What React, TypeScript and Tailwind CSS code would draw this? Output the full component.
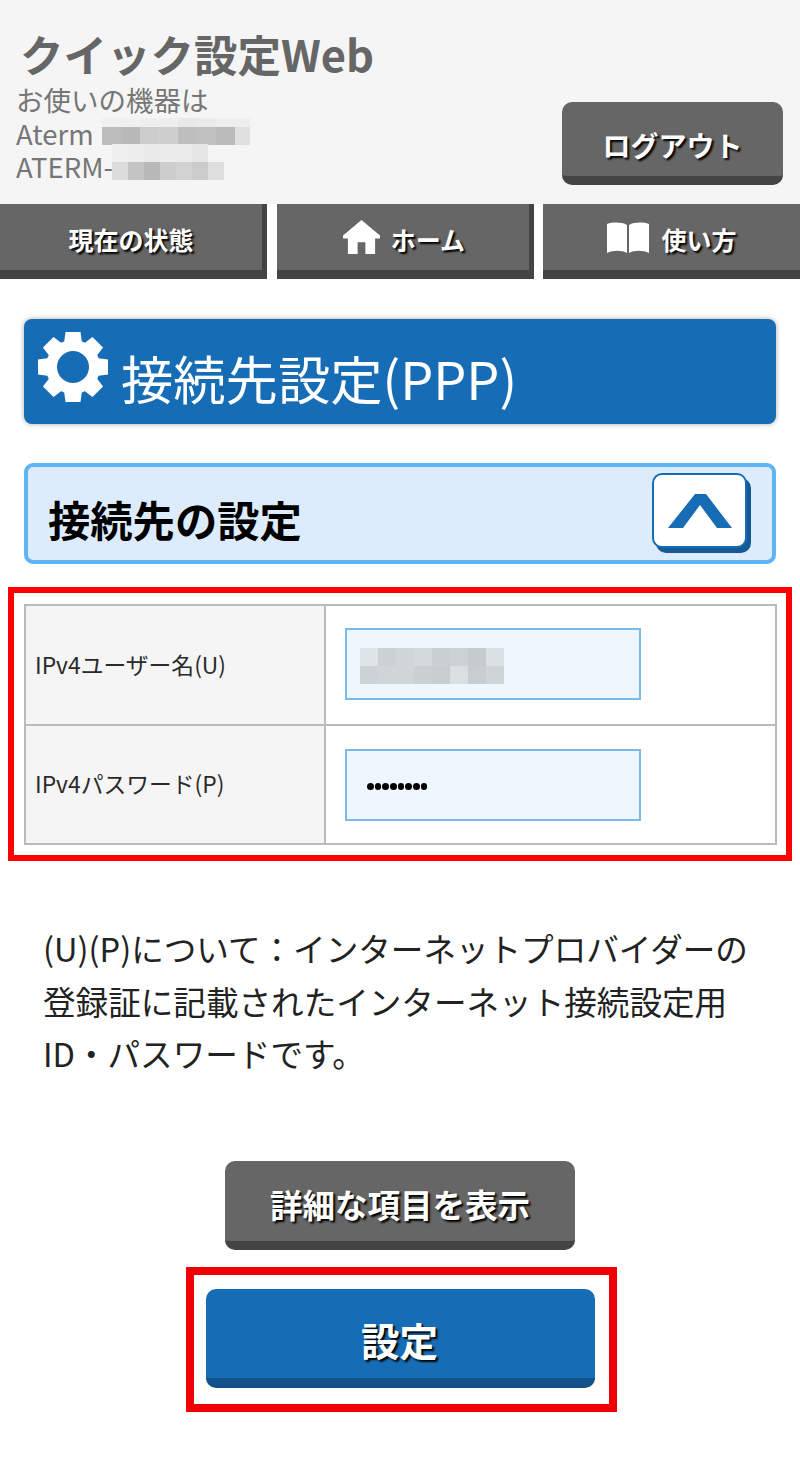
import React from "react";

const FONT = "[font-family:'Noto_Sans_CJK_JP','Noto_Sans',sans-serif]";

function Mosaic({ rows, cell, rowH, className }: { rows: (string | null)[][]; cell: number; rowH: number[]; className?: string }) {
  const w = Math.max(...rows.map((r) => r.length)) * cell;
  const h = rowH.reduce((a, b) => a + b, 0);
  let y = 0;
  return (
    <svg width={w} height={h} viewBox={`0 0 ${w} ${h}`} className={className} shapeRendering="crispEdges">
      {rows.map((r, i) => {
        const top = y;
        y += rowH[i];
        return r.map((c, j) => (c ? <rect key={`${i}-${j}`} x={j * cell} y={top} width={cell} height={rowH[i]} fill={c} /> : null));
      })}
    </svg>
  );
}

function Button3D({ label, className }: { label: string; className: string }) {
  return (
    <button className={`flex items-center justify-center font-bold text-white [text-shadow:2px_2px_2px_#000] ${className}`}>
      {label}
    </button>
  );
}

function NavTab({ children, className }: { children: React.ReactNode; className: string }) {
  return (
    <div className={`flex h-[75px] items-center justify-center gap-[11px] border-b-[9px] border-r-[5px] border-b-[#444444] border-r-[#444444] bg-[#666666] text-[25px] font-bold text-white [text-shadow:2px_2px_2px_#000] ${className}`}>
      {children}
    </div>
  );
}

function Gear() {
  const teeth = [0, 45, 90, 135, 180, 225, 270, 315];
  return (
    <svg width="72" height="72" viewBox="0 0 72 72" className="shrink-0">
      {teeth.map((a) => (
        <polygon key={a} points="28.5,1 43.5,1 45.5,16 26.5,16" fill="#fff" transform={`rotate(${a} 36 36)`} />
      ))}
      <circle cx="36" cy="36" r="21.5" fill="none" stroke="#fff" strokeWidth="11" />
    </svg>
  );
}

export default function App() {
  return (
    <div className={`${FONT} h-[1484px] w-[800px] bg-white`}>
      <header className="flex h-[204px] justify-between bg-[#f5f5f5] pl-[16px] pr-[17px]">
        <div className="pt-[25px]">
          <h1 className="ml-[4px] text-[43.5px] font-bold leading-[58px] text-[#666666]">クイック設定Web</h1>
          <div className="text-[27.5px] leading-[33.5px] text-[#767676]">
            <div>お使いの機器は</div>
            <div className="relative">
              Aterm
              <Mosaic
                className="absolute left-[86px] top-[1px]"
                cell={19}
                rowH={[9, 18]}
                rows={[
                  ["#f0f0f0", "#f0f0f0", "#eeeeee", "#eeeeee", "#e9e9e9", "#ebebeb", "#eeeeee"],
                  ["#bdbdbd", "#b9b9b9", "#cccccc", "#cfcfcf", "#bebebe", "#c0c0c0", "#bbbbbb"],
                ]}
              />
              <div className="absolute left-[219px] top-[1px] h-[9px] w-[15px] bg-[#eeeeee]" />
              <div className="absolute left-[219px] top-[10px] h-[18px] w-[15px] bg-[#e0e0e0]" />
            </div>
            <div className="relative">
              ATERM-
              <Mosaic
                className="absolute left-[96px] top-[-6px]"
                cell={16}
                rowH={[18, 18]}
                rows={[
                  ["#f0f0f0", "#ededed", "#eaeaea", "#ececec", "#ebebeb", "#e6e6e6", null],
                  ["#dcdcdc", "#c4c4c4", "#b9b9b9", "#cdcdcd", "#d2d2d2", "#cbcbcb", "#dedede"],
                ]}
              />
            </div>
          </div>
        </div>
        <Button3D
          label="ログアウト"
          className="mt-[102px] h-[83px] w-[221px] rounded-[10px] border-b-[9px] border-[#444444] bg-[#666666] pt-[12px] text-[28px]"
        />
      </header>

      <nav className="flex justify-between">
        <NavTab className="w-[267px]">
          <span className="mt-[6px]">現在の状態</span>
        </NavTab>
        <NavTab className="w-[257px] pl-[3px]">
          <svg width="37" height="34" viewBox="0 0 38 35" fill="#fff">
            <path d="M19 0 L38 16 L38 19 L33 19 L33 35 L23 35 L23 23 L15 23 L15 35 L5 35 L5 19 L0 19 L0 16 Z" />
          </svg>
          <span className="mt-[6px]">ホーム</span>
        </NavTab>
        <NavTab className="w-[257px] gap-[9px] !border-r-0">
          <svg width="44" height="31" viewBox="0 0 44 31" fill="#fff">
            <path d="M21 3 C16 0 7 0 1 2 L1 31 C7 28 16 28 21 31 Z" />
            <path d="M23 3 C28 0 37 0 43 2 L43 31 C37 28 28 28 23 31 Z" />
          </svg>
          <span className="mt-[6px]">使い方</span>
        </NavTab>
      </nav>

      <main className="flex flex-col">
        <div className="mx-[24px] mt-[40px] flex h-[105px] items-center gap-[12px] rounded-[8px] bg-[#176db5] pl-[13px] shadow-[0_0_5px_rgba(0,0,0,0.35)]">
          <div className="mb-[10px]">
            <Gear />
          </div>
          <h2 className="mt-[12px] text-[52.3px] font-normal leading-none text-white">接続先設定(PPP)</h2>
        </div>

        <div className="mx-[24px] mt-[39px] flex h-[101px] items-center justify-between rounded-[9px] border-[4px] border-[#5fb4f6] bg-[#dcecfc] pl-[20px] pr-[25px]">
          <h3 className="mt-[11px] text-[42.3px] font-bold leading-none text-black">接続先の設定</h3>
          <div className="mb-[6px] flex h-[75px] w-[95px] items-center justify-center rounded-[10px] border-[2px] border-[#176db5] bg-white shadow-[4px_5px_0_#135a96]">
            <svg width="64" height="34" viewBox="0 0 64 34" fill="#176db5">
              <path d="M0 34 L27 0 L38 0 L64 34 L49 34 L32 11 L15 34 Z" />
            </svg>
          </div>
        </div>

        <div className="mx-[8px] mt-[23px] h-[274px] border-[6px] border-[#ff0000] px-[10px] pt-[11px]">
          <div className="h-[241px] w-[753px] border-[2px] border-[#bbbbbb] text-[22.8px] text-[#2a2a2a]">
            <div className="flex h-[120px] border-b-[2px] border-[#bbbbbb]">
              <div className="flex w-[300px] items-center border-r-[2px] border-[#bbbbbb] bg-[#f5f5f5] pl-[9px]">IPv4ユーザー名(U)</div>
              <div className="flex items-center pb-[2px] pl-[19px]">
                <div className="flex h-[72px] w-[296px] items-center border-[2px] border-[#79bbe6] bg-[#eff7fe] pl-[13px]">
                  <Mosaic
                    className="mt-[4px]"
                    cell={18}
                    rowH={[18, 18]}
                    rows={[
                      ["#dfe4e8", "#ccd1d5", "#d0d5d9", "#d4d9dd", "#cbd0d4", "#cdd2d6", "#c6cbd0", "#dbe0e5"],
                      ["#cdd2d6", "#d0d5d8", "#d0d5d8", "#cbd0d3", "#c8cdd0", "#dadfe1", "#c8cdd1", "#cfd4d8"],
                    ]}
                  />
                </div>
              </div>
            </div>
            <div className="flex h-[117px]">
              <div className="flex w-[300px] items-center border-r-[2px] border-[#bbbbbb] bg-[#f5f5f5] pl-[9px]">IPv4パスワード(P)</div>
              <div className="flex items-center pl-[19px]">
                <div className="flex h-[72px] w-[296px] items-center border-[2px] border-[#79bbe6] bg-[#eff7fe] pl-[20px]">
                  <span className="mt-[4px] flex gap-[1.2px]">
                    {Array.from({ length: 8 }).map((_, i) => (
                      <span key={i} className="h-[6.5px] w-[6.5px] rounded-full bg-black" />
                    ))}
                  </span>
                </div>
              </div>
            </div>
          </div>
        </div>

        <p className="ml-[43px] mt-[61px] w-[730px] text-[32.6px] leading-[52.5px] text-[#222222]">
          (U)(P)について：インターネットプロバイダーの
          <br />
          登録証に記載されたインターネット接続設定用
          <br />
          ID・パスワードです。
        </p>

        <div className="mt-[81px] flex flex-col items-center">
          <Button3D
            label="詳細な項目を表示"
            className="h-[89px] w-[350px] rounded-[10px] border-b-[9px] border-[#444444] bg-[#666666] pt-[8px] text-[32.5px]"
          />
          <div className="ml-[3px] mt-[17px] flex h-[145px] w-[431px] items-center justify-center border-[8px] border-[#f00000]">
            <div className="mb-[2px] mr-[2px]">
              <Button3D
                label="設定"
                className="h-[99px] w-[389px] rounded-[10px] border-b-[10px] border-[#12508a] bg-[#176db5] pr-[2px] pt-[13px] text-[38.5px]"
              />
            </div>
          </div>
        </div>
      </main>
    </div>
  );
}
